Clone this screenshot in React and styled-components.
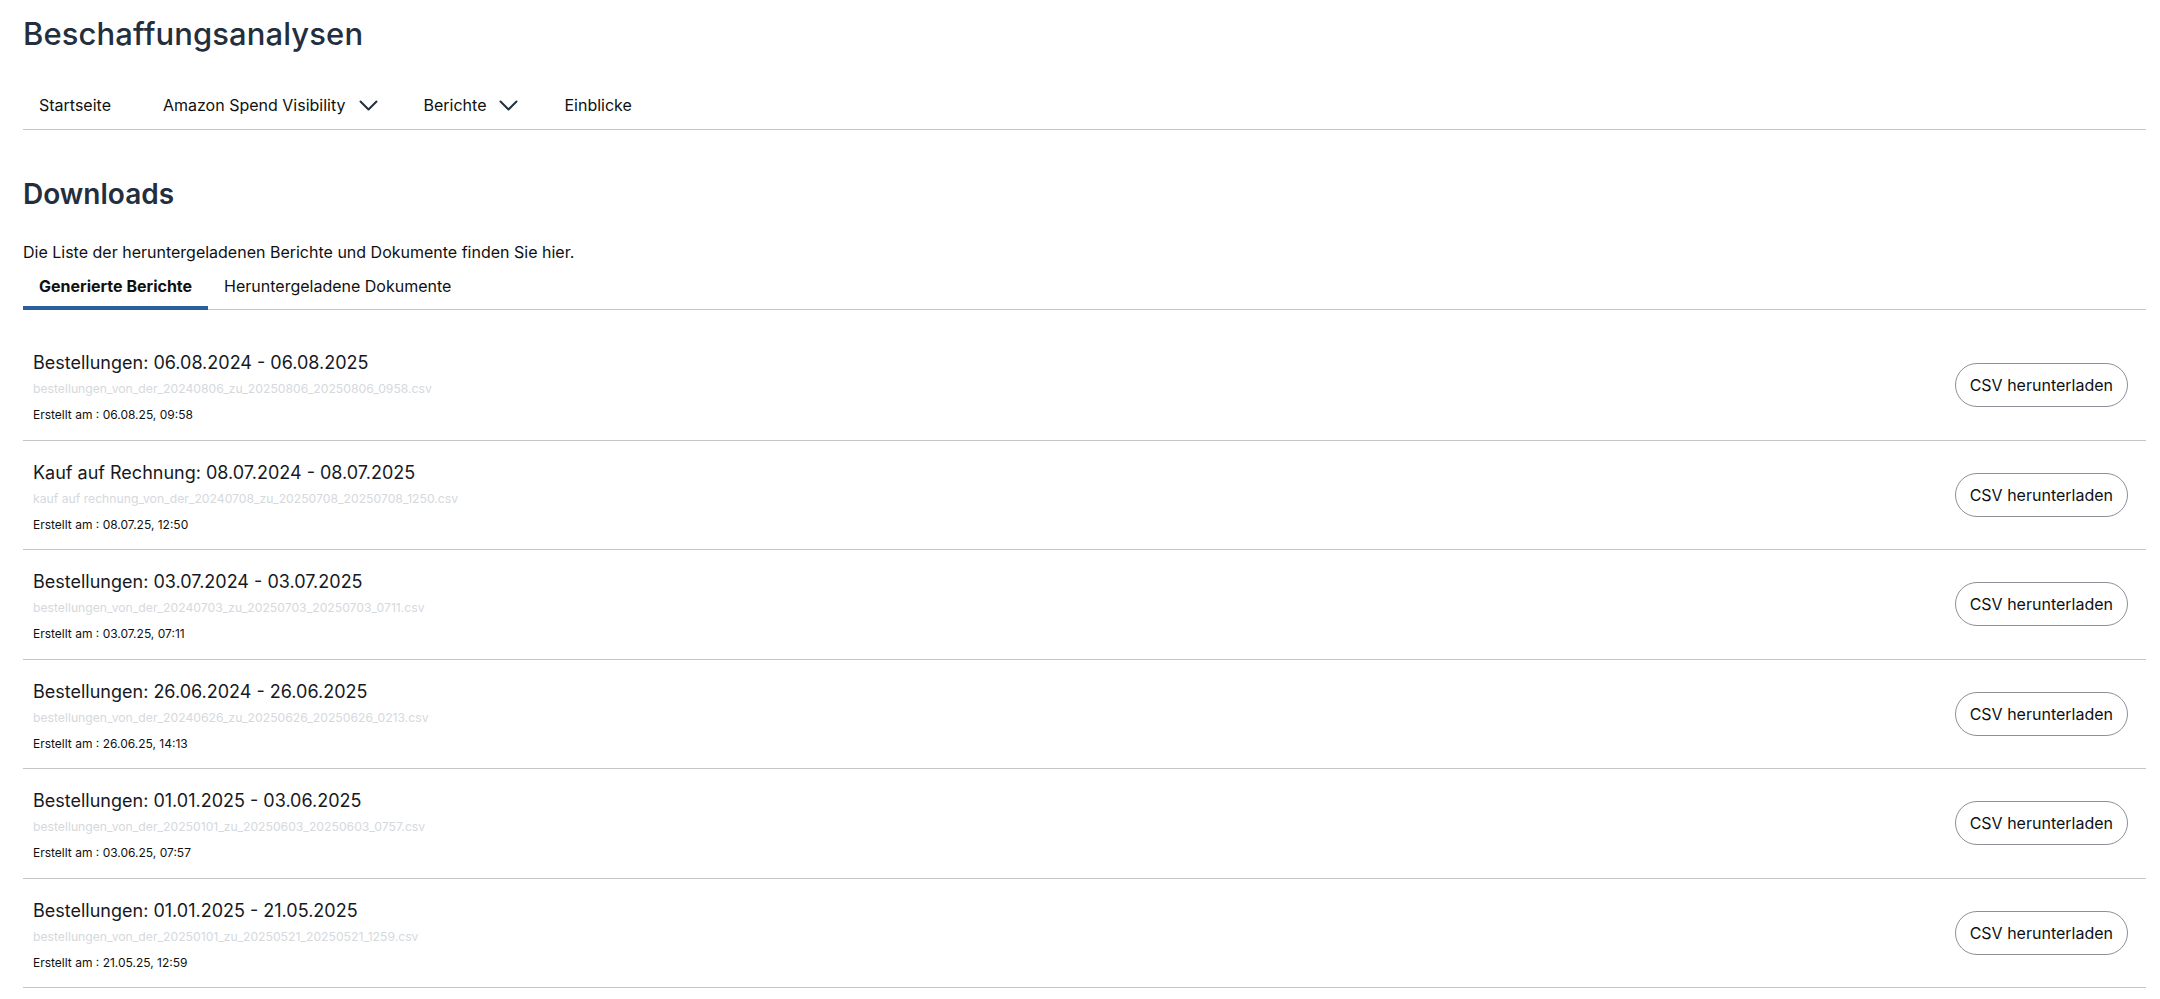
import React, { useState } from 'react';
import styled, { createGlobalStyle } from 'styled-components';

const GlobalStyle = createGlobalStyle`
    body {
        margin: 0;
        background: #ffffff;
        font-family: Inter, Roboto, 'Liberation Sans', sans-serif;
        color: #0f1111;
    }
`;

const reports = [
    {
        title: 'Bestellungen: 06.08.2024 - 06.08.2025',
        file: 'bestellungen_von_der_20240806_zu_20250806_20250806_0958.csv',
        created: '06.08.25, 09:58',
    },
    {
        title: 'Kauf auf Rechnung: 08.07.2024 - 08.07.2025',
        file: 'kauf auf rechnung_von_der_20240708_zu_20250708_20250708_1250.csv',
        created: '08.07.25, 12:50',
    },
    {
        title: 'Bestellungen: 03.07.2024 - 03.07.2025',
        file: 'bestellungen_von_der_20240703_zu_20250703_20250703_0711.csv',
        created: '03.07.25, 07:11',
    },
    {
        title: 'Bestellungen: 26.06.2024 - 26.06.2025',
        file: 'bestellungen_von_der_20240626_zu_20250626_20250626_0213.csv',
        created: '26.06.25, 14:13',
    },
    {
        title: 'Bestellungen: 01.01.2025 - 03.06.2025',
        file: 'bestellungen_von_der_20250101_zu_20250603_20250603_0757.csv',
        created: '03.06.25, 07:57',
    },
    {
        title: 'Bestellungen: 01.01.2025 - 21.05.2025',
        file: 'bestellungen_von_der_20250101_zu_20250521_20250521_1259.csv',
        created: '21.05.25, 12:59',
    },
];

const Chevron = () => (
    <svg width="19" height="11" viewBox="0 0 19 11" fill="none">
        <path d="M1.5 1.5l8 8 8-8" stroke="#232f3e" strokeWidth="2" strokeLinecap="round" strokeLinejoin="round" />
    </svg>
);

const App = () => {
    const [tab, setTab] = useState(0);

    return (
        <Page>
            <GlobalStyle />
            <AppTitle>Beschaffungsanalysen</AppTitle>
            <Nav>
                <NavItem>Startseite</NavItem>
                <NavItem dropdown>
                    Amazon Spend Visibility <Chevron />
                </NavItem>
                <NavItem dropdown>
                    Berichte <Chevron />
                </NavItem>
                <NavItem>Einblicke</NavItem>
            </Nav>

            <Heading>Downloads</Heading>
            <Description>Die Liste der heruntergeladenen Berichte und Dokumente finden Sie hier.</Description>

            <Tabs>
                <Tab active={tab === 0} onClick={() => setTab(0)}>
                    Generierte Berichte
                </Tab>
                <Tab active={tab === 1} onClick={() => setTab(1)}>
                    Heruntergeladene Dokumente
                </Tab>
            </Tabs>

            <List>
                {reports.map(r => (
                    <Row key={r.file}>
                        <RowInfo>
                            <RowTitle>{r.title}</RowTitle>
                            <FileName>{r.file}</FileName>
                            <Created>Erstellt am : {r.created}</Created>
                        </RowInfo>
                        <DownloadButton>CSV herunterladen</DownloadButton>
                    </Row>
                ))}
            </List>
        </Page>
    );
};

const Page = styled.div`
    padding: 0 14px 0 23px;
`;

const AppTitle = styled.h1`
    margin: 0;
    padding-top: 15px;
    font-size: 31px;
    line-height: 38px;
    font-weight: 500;
    color: #232f3e;
    letter-spacing: 0.1px;
`;

const Nav = styled.nav`
    display: flex;
    align-items: center;
    gap: 20px;
    height: 48px;
    margin-top: 28px;
    border-bottom: 1px solid #c4c4c4;
`;

const NavItem = styled.div`
    display: flex;
    align-items: center;
    gap: 13px;
    padding: 0 ${p => (p.dropdown ? 10 : 16)}px 0 16px;
    font-size: 16px;
    color: #0f1111;
    cursor: pointer;
`;

const Heading = styled.h2`
    margin: 47px 0 0;
    font-size: 28px;
    line-height: 34px;
    font-weight: 600;
    color: #232f3e;
`;

const Description = styled.p`
    margin: 30px 0 0;
    font-size: 16px;
    line-height: 22px;
    color: #0f1111;
`;

const Tabs = styled.div`
    display: flex;
    border-bottom: 1px solid #c4c4c4;
    margin-top: 3px;
`;

const Tab = styled.button`
    background: none;
    border: none;
    padding: 10px 16px 10px;
    margin-bottom: -1px;
    font-family: inherit;
    font-size: 16px;
    font-weight: ${p => (p.active ? 700 : 400)};
    color: #0f1111;
    border-bottom: 4px solid ${p => (p.active ? '#2b5f9c' : 'transparent')};
    cursor: pointer;
`;

const List = styled.div`
    margin-top: 21px;
`;

const Row = styled.div`
    display: flex;
    align-items: stretch;
    justify-content: space-between;
    height: 109.5px;
    box-sizing: border-box;
    padding: 0 18px 0 10px;
    border-bottom: 1px solid #c4c4c4;
`;

const RowInfo = styled.div`
    display: flex;
    flex-direction: column;
    padding-top: 20px;
`;

const RowTitle = styled.div`
    font-size: 18px;
    line-height: 24px;
    color: #16191f;
`;

const FileName = styled.div`
    margin-top: 5px;
    font-size: 12.2px;
    line-height: 18px;
    color: #d5d9dd;
`;

const Created = styled.div`
    margin-top: 8px;
    font-size: 12px;
    line-height: 18px;
    color: #0f1111;
`;

const DownloadButton = styled.button`
    align-self: center;
    height: 44px;
    padding: 0 14px;
    border: 1px solid #8d9096;
    border-radius: 22px;
    background: #ffffff;
    font-family: inherit;
    font-size: 16px;
    color: #0f1111;
    cursor: pointer;
`;

export default App;
